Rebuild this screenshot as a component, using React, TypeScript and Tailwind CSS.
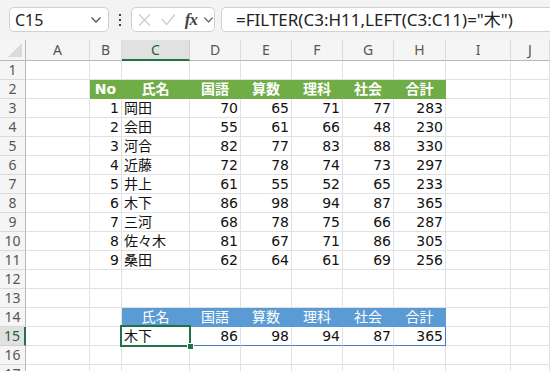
import React from 'react';

const COLS = ['A', 'B', 'C', 'D', 'E', 'F', 'G', 'H', 'I', 'J'];
const COL_W = 'grid-cols-[26px_64px_32px_68px_51px_51px_51px_51px_52px_65px_39px]';

const SUBJECTS = ['氏名', '国語', '算数', '理科', '社会', '合計'];

const DATA: [number, string, number, number, number, number, number][] = [
  [1, '岡田', 70, 65, 71, 77, 283],
  [2, '会田', 55, 61, 66, 48, 230],
  [3, '河合', 82, 77, 83, 88, 330],
  [4, '近藤', 72, 78, 74, 73, 297],
  [5, '井上', 61, 55, 52, 65, 233],
  [6, '木下', 86, 98, 94, 87, 365],
  [7, '三河', 68, 78, 75, 66, 287],
  [8, '佐々木', 81, 67, 71, 86, 305],
  [9, '桑田', 62, 64, 61, 69, 256],
];

const RESULT: (string | number)[] = ['木下', 86, 98, 94, 87, 365];

type CellInfo = {
  text?: string | number;
  kind: 'plain' | 'green' | 'blue' | 'spill';
  align: 'left' | 'right' | 'center';
  last?: boolean;
};

// col index: 1 = A ... 10 = J
function cellAt(row: number, col: number): CellInfo {
  if (row === 2 && col >= 2 && col <= 8) {
    return { text: col === 2 ? 'No' : SUBJECTS[col - 3], kind: 'green', align: 'center' };
  }
  if (row >= 3 && row <= 11 && col >= 2 && col <= 8) {
    const rec = DATA[row - 3];
    return { text: rec[col - 2], kind: 'plain', align: col === 3 ? 'left' : 'right' };
  }
  if (row === 14 && col >= 3 && col <= 8) {
    return { text: SUBJECTS[col - 3], kind: 'blue', align: 'center' };
  }
  if (row === 15 && col >= 3 && col <= 8) {
    return { text: RESULT[col - 3], kind: 'spill', align: col === 3 ? 'left' : 'right', last: col === 8 };
  }
  return { kind: 'plain', align: 'left' };
}

const Cell: React.FC<{ info: CellInfo; selected: boolean }> = ({ info, selected }) => {
  const alignCls =
    info.align === 'right' ? 'justify-end pr-[2px]' : info.align === 'center' ? 'justify-center' : 'justify-start pl-[2px]';
  let cls = 'border-r border-b border-[#e1e1e1] bg-white text-[#111]';
  if (info.kind === 'green') cls = 'border-r border-b border-[#70ad47] bg-[#70ad47] text-white font-bold';
  if (info.kind === 'blue') cls = 'border-r border-b border-[#5b9bd5] bg-[#5b9bd5] text-white';
  if (info.kind === 'spill')
    cls = `border-b border-b-[#3f7fc8] bg-white text-[#111] border-r ${info.last ? 'border-r-[#3f7fc8]' : 'border-r-[#e1e1e1]'}`;
  return (
    <div className={`relative h-[19px] flex items-center whitespace-nowrap overflow-visible ${cls} ${alignCls}`}>
      <span className="leading-none">{info.text}</span>
      {selected && (
        <div className="absolute left-[-2px] top-[-2px] right-[-2px] bottom-[-2px] border-2 border-[#217346] z-10">
          <div className="absolute right-[-5px] bottom-[-5px] w-[7px] h-[7px] bg-[#217346] border border-white" />
        </div>
      )}
    </div>
  );
};

const Chevron = () => (
  <svg width="12" height="8" viewBox="0 0 12 8" fill="none">
    <path d="M1.5 1.5 L6 6 L10.5 1.5" stroke="#555" strokeWidth="1.3" />
  </svg>
);

export default function App() {
  const rows = Array.from({ length: 17 }, (_, i) => i + 1);
  return (
    <div className="w-[550px] h-[371px] overflow-hidden bg-white" style={{ fontFamily: '"Noto Sans", "Noto Sans CJK JP", sans-serif' }}>
      {/* formula bar */}
      <div className="h-[40px] bg-[#f3f3f3] flex items-start pt-[7px] pl-[9px]">
        <div className="w-[100px] h-[25px] bg-white border border-[#d1d1d1] rounded-[5px] flex items-center justify-between pl-[5px] pr-[6px]">
          <span className="text-[16px] text-[#222] leading-none">C15</span>
          <Chevron />
        </div>
        <div className="w-[22px] h-[25px] flex flex-col items-center justify-center gap-[3px]">
          <div className="w-[2px] h-[2px] bg-[#444]" />
          <div className="w-[2px] h-[2px] bg-[#444]" />
          <div className="w-[2px] h-[2px] bg-[#444]" />
        </div>
        <div className="w-[84px] h-[25px] bg-white border border-[#d1d1d1] rounded-[5px] flex items-center pl-[6px] gap-[6px]">
          <svg width="14" height="14" viewBox="0 0 14 14">
            <path d="M1 1 L13 13 M13 1 L1 13" stroke="#c4c4c4" strokeWidth="1.2" />
          </svg>
          <svg width="16" height="14" viewBox="0 0 16 14" className="ml-[4px]">
            <path d="M1 6 L6 12 L15 1" stroke="#c4c4c4" strokeWidth="1.2" fill="none" />
          </svg>
          <span className="ml-[3px] text-[17px] italic font-bold text-[#444] leading-none tracking-[-1px]" style={{ fontFamily: '"Liberation Serif", serif' }}>
            fx
          </span>
          <Chevron />
        </div>
        <div className="ml-[6px] flex-1 h-[25px] bg-white border border-r-0 border-[#d1d1d1] rounded-l-[5px] flex items-center pl-[14px]">
          <span className="text-[17px] text-[#222] leading-none whitespace-nowrap">=FILTER(C3:H11,LEFT(C3:C11)="木")</span>
        </div>
      </div>

      {/* grid */}
      <div className={`grid ${COL_W}`} style={{ fontFamily: '"DejaVu Sans", "Noto Sans CJK JP", sans-serif', fontSize: '14px' }}>
        {/* column header row */}
        <div className="h-[21px] bg-[#f5f5f5] border-r border-b border-[#b8b8b8] relative">
          <svg width="16" height="16" viewBox="0 0 16 16" className="absolute right-[2px] bottom-[2px]">
            <path d="M15 1 L15 15 L1 15 Z" fill="#dadada" />
          </svg>
        </div>
        {COLS.map((c, i) => {
          const sel = c === 'C';
          return (
            <div
              key={`h${i}`}
              className={`h-[21px] flex items-center justify-center text-[14px] leading-none border-r border-b ${
                sel ? 'bg-[#e1e1e1] text-[#1f5f3a] border-r-[#d0d0d0] border-b-2 border-b-[#217346]' : 'bg-[#f5f5f5] text-[#555] border-r-[#dadada] border-b-[#b8b8b8]'
              }`}
              style={{ fontFamily: '"Noto Sans", sans-serif' }}
            >
              {c}
            </div>
          );
        })}
        {rows.map((r) => (
          <React.Fragment key={r}>
            <div
              className={`h-[19px] flex items-center justify-center text-[14px] leading-none border-b ${
                r === 15 ? 'bg-[#e1e1e1] text-[#1f5f3a] border-r-2 border-r-[#217346] border-b-[#d0d0d0]' : 'bg-[#f5f5f5] text-[#555] border-r border-r-[#b8b8b8] border-b-[#dadada]'
              }`}
              style={{ fontFamily: '"Noto Sans", sans-serif' }}
            >
              {r}
            </div>
            {COLS.map((_, ci) => (
              <Cell key={`${r}-${ci}`} info={cellAt(r, ci + 1)} selected={r === 15 && ci === 2} />
            ))}
          </React.Fragment>
        ))}
      </div>
    </div>
  );
}
